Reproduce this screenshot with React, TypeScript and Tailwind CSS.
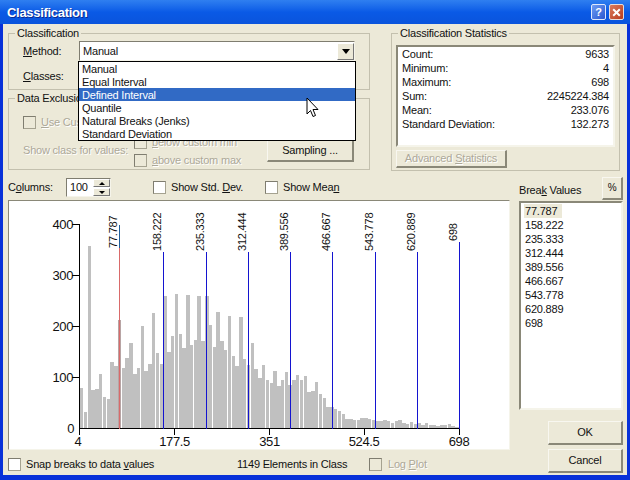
const tops3: number[] = [565,636,138,570,567,522,590,597,486,498,360,504,474,429,522,504,378,513,492,339,459,492,288,456,408,282,402,444,285,435,420,288,423,288,375,441,336,423,450,348,468,498,351,477,495,429,507,534,495,540,549,513,557,540,516,555,540,525,540,528,576,573,546,582,594,621,621,627,633,642,658,657,661,659,654,655,657,660,663,663,660,664,668,662,660,668,672,667,672,669,675,670,674,674,679,676,675,673,678,681];
const breaks = [
  { x: 119, v: "77.787", top: 225 },
  { x: 163, v: "158.222", top: 252 },
  { x: 206, v: "235.333", top: 252 },
  { x: 248, v: "312.444", top: 252 },
  { x: 290, v: "389.556", top: 252 },
  { x: 332, v: "466.667", top: 252 },
  { x: 375, v: "543.778", top: 252 },
  { x: 417, v: "620.889", top: 252 },
  { x: 459, v: "698", top: 242 },
];
const FONT = "font-['Liberation_Sans',Arial,sans-serif]";
const LINE = "#1414d0";

function Check({ disabled }: { disabled?: boolean }) {
  return <span className={`inline-block w-[13px] h-[13px] shrink-0 border border-[#a5a290] ${disabled ? "bg-[#ece9d8]" : "bg-white"}`} style={{ borderTopColor: "#7f7d70", borderLeftColor: "#7f7d70" }} />;
}

function Group({ title, className, children }: { title: string; className: string; children: React.ReactNode }) {
  return (
    <div className={`relative border border-[#c3c0ae] ${className}`}>
      <span className="absolute left-[6px] -top-[8px] bg-[#ece9d8] px-[2px] leading-[14px] text-[#111] whitespace-nowrap [text-shadow:none]">{title}</span>
      {children}
    </div>
  );
}

function Btn({ className, children, disabled }: { className: string; children: React.ReactNode; disabled?: boolean }) {
  return (
    <div className={`flex items-center justify-center whitespace-nowrap bg-[#ece9d8] border border-[#f8f7f0] border-r-[#8a8878] border-b-[#8a8878] border-r-2 border-b-2 ${disabled ? "text-[#aca899] [text-shadow:1px_1px_#fff]" : "text-[#111]"} ${className}`}>
      {children}
    </div>
  );
}

function Chart() {
  return (
    <svg width="500" height="249" viewBox="9 201 500 249" className="block">
      <g shapeRendering="crispEdges">
        {tops3.map((t, i) => {
          const x = Math.round(80 + i * 3.79);
          const r = Math.round(80 + i * 3.79 + 3.45);
          return <rect key={i} x={x} y={Math.round(200 + t / 3)} width={r - x} height={Math.round((685 - t) / 3)} fill={i === 10 ? "#b8a4a4" : "#c0c0c0"} />;
        })}
      </g>
      <line x1="79.5" y1="224" x2="79.5" y2="428.5" stroke="#000" />
      <line x1="79" y1="428.5" x2="460" y2="428.5" stroke="#000" />
      {[[224, "400"], [275, "300"], [326, "200"], [377, "100"], [428, "0"]].map(([y, l]) => (
        <g key={l as string}>
          {l !== "0" && <line x1="72" x2="80" y1={(y as number) + 0.5} y2={(y as number) + 0.5} stroke="#000" />}
          <text x={l === "0" ? 74 : 73} y={(y as number) + 5} textAnchor="end" fontSize="13" letterSpacing="-0.4" fill="#111" fontFamily="Liberation Sans">{l}</text>
        </g>
      ))}
      {[[79.5, "4", 78], [174.5, "177.5", 174.5], [269.5, "351", 269.5], [364.5, "524.5", 364], [459.5, "698", 459]].map(([x, l, tx]) => (
        <g key={l as string}>
          <line x1={x as number} x2={x as number} y1="428" y2="435" stroke="#000" />
          <text x={tx as number} y="446" textAnchor="middle" fontSize="13" letterSpacing="-0.4" fill="#111" fontFamily="Liberation Sans">{l}</text>
        </g>
      ))}
      {breaks.map((b, i) => (
        <g key={b.v}>
          {i === 0 ? (
            <>
              <rect x={b.x} width="1" y={b.top} height={248 - b.top} fill="#1f5f9a" />
              <rect x={b.x} width="1" y={248} height={181} fill="#d96a6a" />
            </>
          ) : (
            <rect x={b.x} width="1" y={b.top} height={429 - b.top} fill={LINE} />
          )}
          <text transform={`translate(${b.x - 2} ${i === 0 ? 248 : b.top - 1}) rotate(-90)`} fontSize="11" letterSpacing="-0.2" fill="#111" fontFamily="Liberation Sans">{b.v}</text>
        </g>
      ))}
    </svg>
  );
}

export default function App() {
  return (
    <div className={`w-[630px] h-[480px] overflow-hidden bg-[#0831d9] flex flex-col text-[11px] tracking-[-0.2px] leading-[13px] text-[#111] ${FONT}`}>
      <div className="h-[24px] shrink-0 flex items-center justify-between pl-[7px] pr-[6px] bg-gradient-to-b from-[#2f7ff0] via-[#0a5ae6] to-[#0a54dc]">
        <span className="text-white font-bold text-[13px] tracking-[-0.3px] [text-shadow:1px_1px_#0a2a90]">Classification</span>
        <div className="flex gap-[3px]">
          <div className="w-[15px] h-[16px] rounded-[2px] border border-[#dfe8fb] bg-gradient-to-br from-[#6f9cf2] to-[#2a55d0] text-white font-bold text-[11px] flex items-center justify-center">?</div>
          <div className="w-[15px] h-[16px] rounded-[2px] border border-[#e8dcd8] bg-gradient-to-br from-[#d97a5c] to-[#b83a1c] flex items-center justify-center">
            <svg width="9" height="9" viewBox="0 0 9 9"><path d="M1.2 1.2 L7.8 7.8 M7.8 1.2 L1.2 7.8" stroke="#fff" strokeWidth="2" /></svg>
          </div>
        </div>
      </div>
      <div className="relative flex-1 mx-[3px] mb-[5px] bg-[#ece9d8] pt-[9px] pl-[5px] pr-[4px] flex flex-col min-h-0">
        <div className="flex gap-[21px] h-[138px] shrink-0">
          <div className="w-[362px] flex flex-col gap-[8px]">
            <Group title="Classification" className="h-[57px] pl-[14px] pt-[7px]">
              <div className="flex items-start">
                <span className="w-[56px] pt-[4px]"><u>M</u>ethod:</span>
                <div className="w-[276px] h-[20px] bg-white border border-[#7f7d70] border-r-[#f5f4ea] border-b-[#f5f4ea] pl-[3px] flex items-center justify-between">
                  <span>Manual</span>
                  <div className="w-[17px] h-[17px] bg-[#ece9d8] border border-[#fff] border-r-[#777] border-b-[#777] flex items-center justify-center">
                    <svg width="8" height="5" viewBox="0 0 8 5"><path d="M0 0 H8 L4 5 Z" fill="#000" /></svg>
                  </div>
                </div>
              </div>
              <div className="mt-[9px]"><u>C</u>lasses:</div>
            </Group>
            <Group title="Data Exclusion" className="h-[72px] text-[#aca899] [text-shadow:1px_1px_#fff]">
              <div className="pl-[14px] pt-[17px] flex items-center gap-[5px] whitespace-nowrap">
                <Check disabled />
                <span><u>U</u>se Custom</span>
              </div>
              <div className="flex pl-[14px] mt-[7px] items-start whitespace-nowrap">
                <span className="w-[111px] pt-[8px]">Show class for values:</span>
                <div className="flex flex-col gap-[5px] w-[133px]">
                  <div className="flex items-center gap-[5px]"><Check disabled /><span><u>b</u>elow custom min</span></div>
                  <div className="flex items-center gap-[5px]"><Check disabled /><span><u>a</u>bove custom max</span></div>
                </div>
                <Btn className="w-[87px] h-[22px] mt-[4px] [text-shadow:none]">Sampling ...</Btn>
              </div>
            </Group>
          </div>
          <Group title="Classification Statistics" className="w-[229px] h-[138px] px-[4px] pt-[11px]">
            <div className="h-[102px] bg-white border-2 border-[#8a8878] border-r-[#f5f4ea] border-b-[#f5f4ea] px-[4px] flex justify-between leading-[14px]">
              <div className="flex flex-col">
                {["Count:", "Minimum:", "Maximum:", "Sum:", "Mean:", "Standard Deviation:"].map((s) => <span key={s}>{s}</span>)}
              </div>
              <div className="flex flex-col items-end">
                {["9633", "4", "698", "2245224.384", "233.076", "132.273"].map((s) => <span key={s}>{s}</span>)}
              </div>
            </div>
            <Btn disabled className="w-[111px] h-[18px] mt-[3px]">Advanced <u className="ml-[3px]">S</u>tatistics</Btn>
          </Group>
        </div>
        <div className="flex flex-1 min-h-0 mt-[5px]">
          <div className="w-[502px] flex flex-col">
            <div className="h-[24px] flex items-center shrink-0 pb-[1px]">
              <span className="w-[58px]">C<u>o</u>lumns:</span>
              <div className="w-[45px] h-[19px] bg-white border border-[#7f7d70] border-r-[#f5f4ea] border-b-[#f5f4ea] flex items-center justify-between pl-[3px]">
                <span>100</span>
                <div className="w-[17px] h-full flex flex-col gap-[1px]">
                  {["M0 3 L3 0 L6 3 Z", "M0 0 L3 3 L6 0 Z"].map((d) => (
                    <div key={d} className="flex-1 bg-[#ece9d8] border border-white border-r-[#777] border-b-[#777] flex items-center justify-center">
                      <svg width="6" height="3" viewBox="0 0 6 3"><path d={d} fill="#000" /></svg>
                    </div>
                  ))}
                </div>
              </div>
              <div className="ml-[42px] flex items-center gap-[5px] w-[112px]"><Check /><span>Show Std. <u>D</u>ev.</span></div>
              <div className="flex items-center gap-[5px]"><Check /><span>Show Mea<u>n</u></span></div>
            </div>
            <div className="h-[250px] shrink-0 bg-white border border-[#8a8878] border-r-[#f5f4ea] border-b-[#f5f4ea] overflow-hidden">
              <Chart />
            </div>
            <div className="flex items-center mt-[8px]">
              <Check />
              <span className="ml-[5px] w-[211px]">Snap breaks to data <u>v</u>alues</span>
              <span className="w-[132px]">1149 Elements in Class</span>
              <Check disabled />
              <span className="ml-[6px] text-[#aca899] [text-shadow:1px_1px_#fff]">Log <u>P</u>lot</span>
            </div>
          </div>
          <div className="ml-[9px] w-[105px] flex flex-col">
            <div className="h-[24px] flex items-center justify-between shrink-0">
              <span className="pt-[4px]">Brea<u>k</u> Values</span>
              <Btn className="w-[21px] h-[23px] text-[10px]">%</Btn>
            </div>
            <div className="h-[209px] mt-[1px] bg-white border-2 border-[#8a8878] border-r-[#f5f4ea] border-b-[#f5f4ea] pl-[3px] pt-[1px] leading-[14px] flex flex-col items-start shrink-0">
              {breaks.map((b, i) => (
                <span key={b.v} className={i === 0 ? "bg-[#ece9d8] pl-[1px] pr-[5px]" : "pl-[1px]"}>{b.v}</span>
              ))}
            </div>
            <Btn className="w-[75px] h-[24px] ml-[29px] mt-[11px]">OK</Btn>
            <Btn className="w-[75px] h-[24px] ml-[29px] mt-[4px]">Cancel</Btn>
          </div>
        </div>

        <div className="absolute left-[75px] top-[37px] w-[278px] h-[80px] bg-white border border-black flex flex-col text-[#111]">
          {["Manual", "Equal Interval", "Defined Interval", "Quantile", "Natural Breaks (Jenks)", "Standard Deviation"].map((s, i) => (
            <div key={s} className={`h-[13px] pl-[3px] leading-[14px] ${i === 2 ? "bg-[#316ac5] text-white" : ""}`}>{s}</div>
          ))}
        </div>
        <svg className="absolute left-[303px] top-[73px]" width="13" height="21" viewBox="0 0 13 21">
          <path d="M1 1 V17 L4.5 13.5 L7 19.5 L9.5 18.5 L7 12.5 H12 Z" fill="#fff" stroke="#000" />
        </svg>
      </div>
    </div>
  );
}
